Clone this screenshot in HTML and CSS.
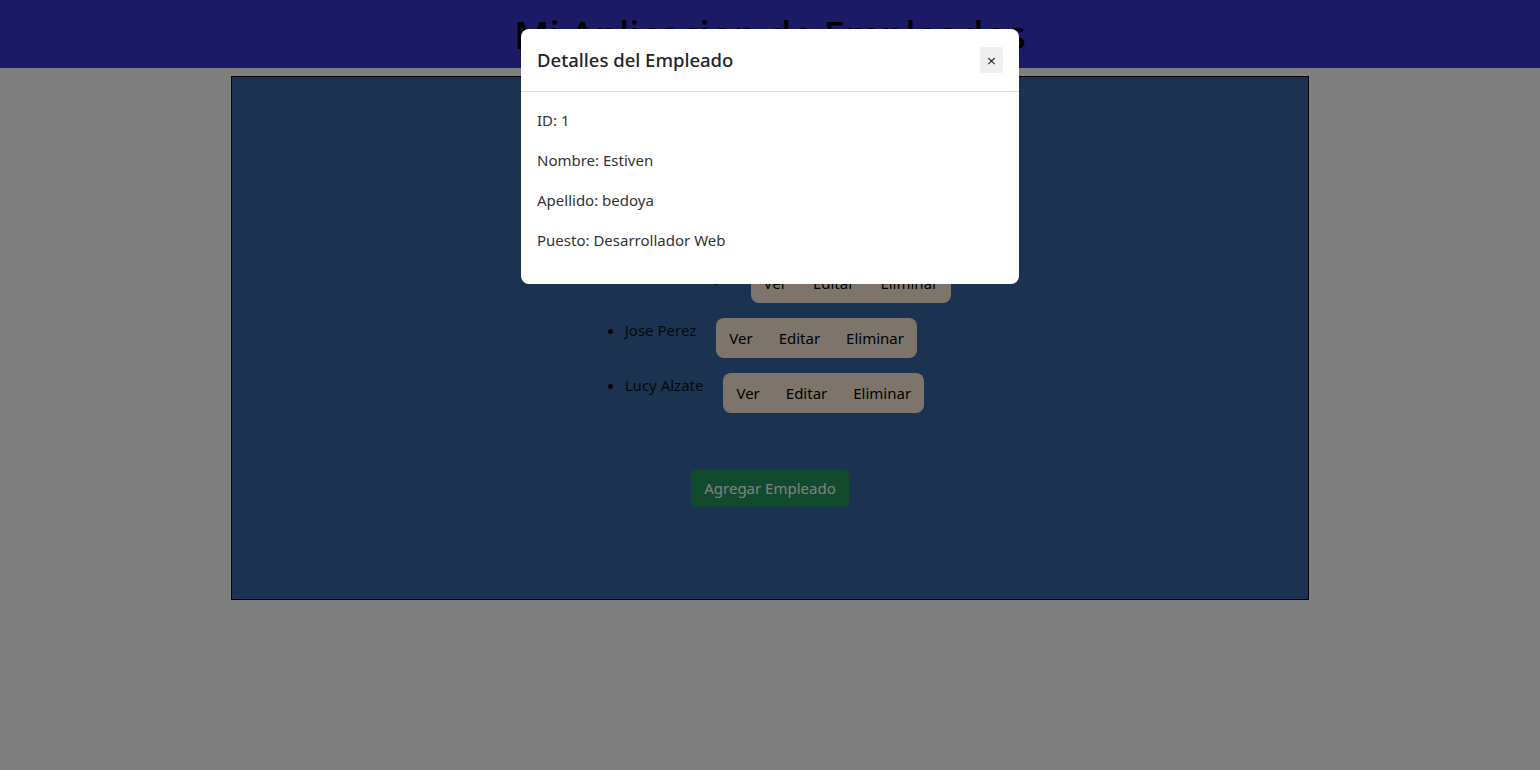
FILE: index.html
```html
<!DOCTYPE html>
<html lang="es">
<head>
<meta charset="utf-8">
<title>Mi Aplicacion de Empleados</title>
<link rel="stylesheet" href="styles.css">
</head>
<body>
<header class="app-header">
  <h1 class="app-title">Mi Aplicacion de Empleados</h1>
</header>
<main class="panel">
  <ul class="employee-list">
    <li class="employee">Estiven bedoya<div class="actions"><button class="action">Ver</button><button class="action">Editar</button><button class="action">Eliminar</button></div></li>
    <li class="employee">Jose Perez<div class="actions"><button class="action">Ver</button><button class="action">Editar</button><button class="action">Eliminar</button></div></li>
    <li class="employee">Lucy Alzate<div class="actions"><button class="action">Ver</button><button class="action">Editar</button><button class="action">Eliminar</button></div></li>
  </ul>
  <button class="add-button">Agregar Empleado</button>
</main>
<div class="overlay">
  <div class="modal">
    <div class="modal-header">
      <h3 class="modal-title">Detalles del Empleado</h3>
      <button class="modal-close">×</button>
    </div>
    <div class="modal-body">
      <p class="detail">ID: 1</p>
      <p class="detail">Nombre: Estiven</p>
      <p class="detail">Apellido: bedoya</p>
      <p class="detail">Puesto: Desarrollador Web</p>
    </div>
  </div>
</div>
</body>
</html>
```
FILE: styles.css
```css
* { box-sizing: border-box; }
html, body { height: 100%; }
body {
  margin: 0;
  background: #ffffff;
  font-family: "Noto Sans", "Open Sans", sans-serif;
  color: #000;
}
.app-header {
  background: #3834c8;
  padding: 10px;
  text-align: center;
}
.app-title {
  margin: 0;
  font-size: 38.5px;
  line-height: 48px;
  font-weight: 500;
  color: #000;
}
.panel {
  width: 70%;
  height: 524px;
  margin: 8px auto 0;
  border: 1px solid #000;
  background: #3666a0;
  padding: 186px 0 0;
  display: flex;
  flex-direction: column;
  align-items: center;
}
.employee-list {
  width: fit-content;
  margin: 0;
  padding: 0 0 0 40px;
  position: relative;
  left: -2px;
  font-size: 15px;
  color: #111;
}
.employee {
  line-height: 24px;
  margin-bottom: 15px;
}
.actions {
  display: inline-flex;
  vertical-align: top;
  margin-left: 20px;
  background: #faebd7;
  border-radius: 8px;
}
.action {
  font: inherit;
  font-size: 15px;
  line-height: 20px;
  padding: 10px 13px;
  background: none;
  border: none;
  color: #000;
}
.add-button {
  margin-top: 42px;
  font: inherit;
  font-size: 15px;
  line-height: 21px;
  padding: 8px 13px;
  background: #229458;
  color: #fff;
  border: none;
  border-radius: 5px;
}
.overlay {
  position: fixed;
  inset: 0;
  background: rgba(0, 0, 0, 0.5);
  display: flex;
  justify-content: center;
  align-items: flex-start;
}
.modal {
  width: 498px;
  margin-top: 29px;
  background: #fff;
  border-radius: 8px;
  color: #333;
}
.modal-header {
  display: flex;
  align-items: center;
  justify-content: space-between;
  padding: 16px;
  border-bottom: 1px solid #dee2e6;
}
.modal-title {
  margin: 0;
  font-size: 18.5px;
  line-height: 30px;
  font-weight: 500;
  color: #212529;
}
.modal-close {
  width: 23px;
  height: 26px;
  padding: 0;
  border: none;
  border-radius: 2px;
  background: #efefef;
  font-family: "DejaVu Sans", sans-serif;
  font-size: 13px;
  color: #222;
}
.modal-body {
  padding: 16px;
}
.detail {
  margin: 0 0 16px;
  font-size: 15px;
  line-height: 24px;
}
```
